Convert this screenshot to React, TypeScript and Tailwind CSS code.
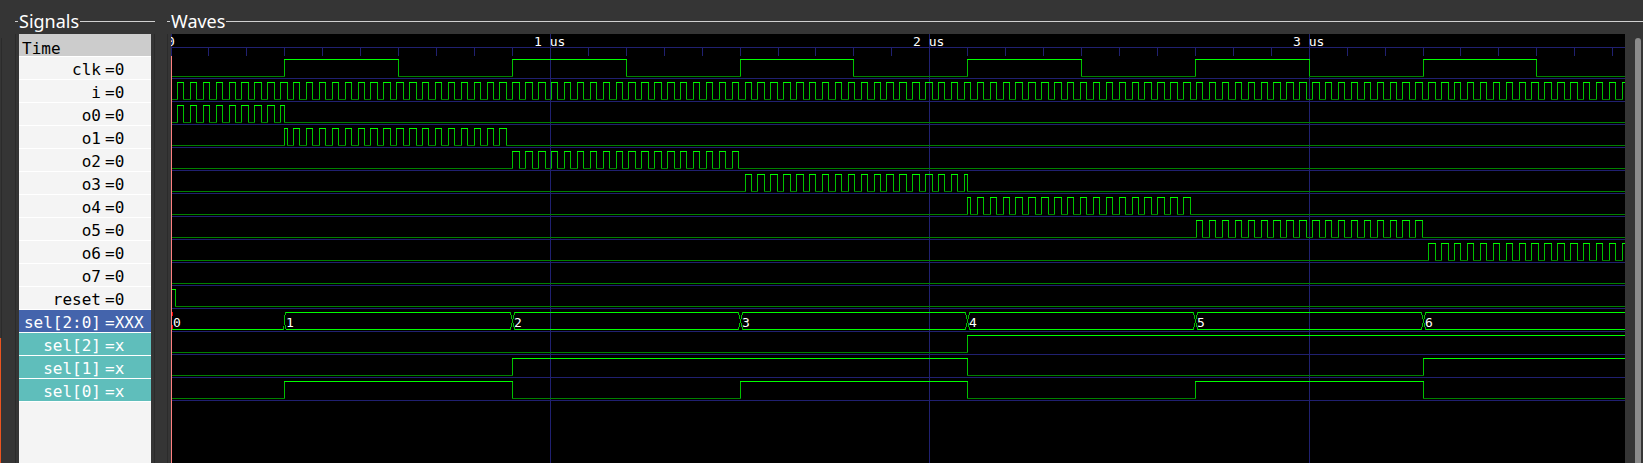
const SCALE = 379.4;
const WIDTH = 1454;
const ROW = 23;

type Edge = [number, number];

const px = (t: number) => Math.floor(t * SCALE);

const input: Edge[] = Array.from({ length: 226 }, (_, k): Edge => [k * 0.017, k % 2]);

const gate = (from: number, to: number): Edge[] => {
  const before = input.filter(([t]) => t <= from);
  const startLevel = before.length ? before[before.length - 1][1] : 0;
  return [
    [0, 0],
    [from, startLevel],
    ...input.filter(([t]) => t > from && t < to),
    [to, 0],
  ];
};

const toggles = (...times: number[]): Edge[] => [[0, 0], ...times.map((t, k): Edge => [t, (k + 1) % 2])];

type Signal = { name: string; value: string; edges: Edge[]; tone?: "bus" | "bit" };

const signals: Signal[] = [
  { name: "clk", value: "0", edges: toggles(0.3, 0.6, 0.9, 1.2, 1.5, 1.8, 2.1, 2.4, 2.7, 3.0, 3.3, 3.6) },
  { name: "i", value: "0", edges: input },
  { name: "o0", value: "0", edges: gate(0, 0.3) },
  { name: "o1", value: "0", edges: gate(0.3, 0.9) },
  { name: "o2", value: "0", edges: gate(0.9, 1.5) },
  { name: "o3", value: "0", edges: gate(1.5, 2.1) },
  { name: "o4", value: "0", edges: gate(2.1, 2.7) },
  { name: "o5", value: "0", edges: gate(2.7, 3.3) },
  { name: "o6", value: "0", edges: gate(3.3, 3.9) },
  { name: "o7", value: "0", edges: toggles() },
  { name: "reset", value: "0", edges: [[0, 1], [0.012, 0]] },
  { name: "sel[2:0]", value: "XXX", edges: [], tone: "bus" },
  { name: "sel[2]", value: "x", edges: toggles(2.1), tone: "bit" },
  { name: "sel[1]", value: "x", edges: toggles(0.9, 2.1, 3.3), tone: "bit" },
  { name: "sel[0]", value: "x", edges: toggles(0.3, 0.9, 1.5, 2.1, 2.7, 3.3), tone: "bit" },
].map((s) => s as Signal);

const changes = [0.3, 0.9, 1.5, 2.1, 2.7, 3.3];

function Trace({ edges, top }: { edges: Edge[]; top: number }) {
  let high = "";
  let low = "";
  let rise = "";
  edges.forEach(([t, level], k) => {
    const x0 = px(t);
    const x1 = k + 1 < edges.length ? px(edges[k + 1][0]) : WIDTH;
    if (level) high += `M${x0} ${top + 3.5}H${x1 + 1}`;
    else low += `M${x0} ${top + 20.5}H${x1 + 1}`;
    if (k > 0 && edges[k - 1][1] !== level) rise += `M${x0 + 0.5} ${top + 3}V${top + 20}`;
  });
  return (
    <g>
      <path d={low} stroke="#008000" />
      <path d={rise} stroke="#00c000" />
      <path d={high} stroke="#00ff00" />
    </g>
  );
}

function Bus({ top }: { top: number }) {
  const bounds = [...changes.map(px), WIDTH + 1];
  return (
    <g>
      <path d={`M1 ${top + 20.5}H${bounds[0] - 1}`} stroke="#00ff00" />
      <path d={`M1 ${top + 3}v4M1 ${top + 16}v4`} stroke="#ff0000" strokeWidth={2} />
      {changes.map((t, k) => {
        const x = bounds[k];
        return (
          <g key={t}>
            <path
              d={`M${x + 2} ${top + 3.5}H${bounds[k + 1] - 1}M${x + 2} ${top + 20.5}H${bounds[k + 1] - 1}`}
              stroke="#00ff00"
            />
            <path
              d={
                k === 0
                  ? `M${x + 1.5} ${top + 3}v3M${x + 0.5} ${top + 6}v10M${x + 1.5} ${top + 16}v4M${x - 0.5} ${top + 17}v4`
                  : `M${x - 1.5} ${top + 3}v3M${x - 0.5} ${top + 6}v4M${x + 0.5} ${top + 10}v4M${x + 1.5} ${top + 14}v4M${x + 2.5} ${top + 18}v3M${x + 2.5} ${top + 3}v3M${x + 1.5} ${top + 6}v4M${x - 0.5} ${top + 14}v4M${x - 1.5} ${top + 18}v3`
              }
              stroke="#00c000"
            />
          </g>
        );
      })}
      {[0, ...changes].map((t, k) => (
        <text key={k} x={px(t) + 2} y={top + 18} fill="#ffffff" className="font-['DejaVu_Sans_Mono',monospace] text-[13px]">
          {k}
        </text>
      ))}
    </g>
  );
}

function Waveform() {
  return (
    <svg width="100%" height="100%" fill="none" shapeRendering="crispEdges" className="block h-full w-full bg-black">
      <path
        d={signals.map((_, k) => `M0 ${22 + (k + 1) * ROW - 0.5}H${WIDTH}`).join("")}
        stroke="#202070"
      />
      <path d={`M0 13.5H${WIDTH}`} stroke="#202070" />
      <path
        d={Array.from({ length: 39 }, (_, k) => `M${px(k / 10) + 0.5} 13V22`).join("")}
        stroke="#202070"
      />
      <path d="M.5 0V22" stroke="#202070" />
      {[1, 2, 3].map((us) => (
        <line key={us} x1={px(us) + 0.5} x2={px(us) + 0.5} y1="0" y2="100%" stroke="#202070" />
      ))}
      {signals.map((s, k) =>
        s.tone === "bus" ? (
          <Bus key={s.name} top={22 + k * ROW} />
        ) : (
          <Trace key={s.name} edges={s.edges} top={22 + k * ROW} />
        ),
      )}
      <line x1="0.5" x2="0.5" y1="22" y2="100%" stroke="#ff8080" />
      <text x="-4" y="12" fill="#ffffff" className="font-['DejaVu_Sans_Mono',monospace] text-[13px]">
        0
      </text>
      {[1, 2, 3].map((us) => (
        <text key={us} x={px(us) - 16} y="12" fill="#ffffff" className="font-['DejaVu_Sans_Mono',monospace] text-[13px]">
          {us} us
        </text>
      ))}
    </svg>
  );
}

function Heading({ children }: { children: string }) {
  return (
    <div className="flex h-[34px] items-center pt-2">
      <span className="h-px w-[3px] bg-[#d0d0d0]" />
      <h2 className="px-px font-['Noto_Sans',sans-serif] text-[18px] leading-6 text-white">{children}</h2>
      <span className="h-px flex-1 bg-[#d0d0d0]" />
    </div>
  );
}

const rowTone = {
  plain: "bg-[#f4f4f4] text-black",
  bus: "bg-[#4464ac] text-white",
  bit: "bg-[#5fbebb] text-white",
};

export default function App() {
  return (
    <main className="flex h-screen w-full overflow-hidden bg-[#353535]">
      <div className="flex w-[2px] flex-col pt-[38px]">
        <div className="h-[300px] border-r border-[#2b2b2b]" />
        <div className="w-px flex-1 bg-[#e95420]" />
      </div>
      <section className="ml-[13px] flex w-[140px] flex-col">
        <Heading>Signals</Heading>
        <div className="flex min-h-0 flex-1 border-x border-[#2b2b2b] pr-[3px] pl-[3px]">
          <div className="flex-1 overflow-hidden bg-[#f4f4f4] font-['DejaVu_Sans_Mono',monospace] text-[16px]">
            <div className="h-[23px] border-b border-white bg-[#cccccc] pl-[3px] leading-[30px] text-black">
              Time
            </div>
            {signals.map((s) => (
              <div
                key={s.name}
                className={`flex h-[23px] border-b border-white pl-[2px] leading-[26px] whitespace-pre ${rowTone[s.tone ?? "plain"]}`}
              >
                <span className="w-20 text-right">{s.name}</span>
                <span className="pl-1">={s.value}</span>
              </div>
            ))}
          </div>
        </div>
      </section>
      <section className="ml-3 flex min-w-0 flex-1 flex-col">
        <Heading>Waves</Heading>
        <div className="flex min-h-0 flex-1 border-l border-[#2b2b2b] pl-[3px]">
          <div className="min-w-0 flex-1">
            <Waveform />
          </div>
          <div className="ml-[10px] flex w-2 pt-1">
            <div className="w-[6px] rounded-t-sm bg-[#8b8b8b]" />
          </div>
        </div>
      </section>
    </main>
  );
}
